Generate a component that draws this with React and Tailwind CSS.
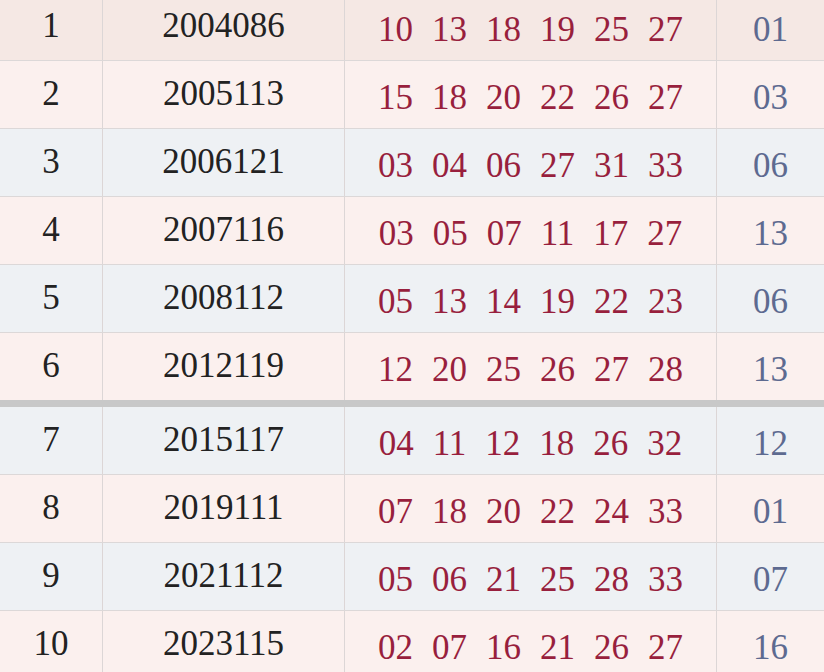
const rows = [
  ["1", "2004086", ["10", "13", "18", "19", "25", "27"], "01", "bg-[#f5e8e4]"],
  ["2", "2005113", ["15", "18", "20", "22", "26", "27"], "03", "bg-[#fbf0ee]"],
  ["3", "2006121", ["03", "04", "06", "27", "31", "33"], "06", "bg-[#eef1f4]"],
  ["4", "2007116", ["03", "05", "07", "11", "17", "27"], "13", "bg-[#fbf0ee]"],
  ["5", "2008112", ["05", "13", "14", "19", "22", "23"], "06", "bg-[#eef1f4]"],
  ["6", "2012119", ["12", "20", "25", "26", "27", "28"], "13", "bg-[#fbf0ee]"],
  ["7", "2015117", ["04", "11", "12", "18", "26", "32"], "12", "bg-[#eef1f4]"],
  ["8", "2019111", ["07", "18", "20", "22", "24", "33"], "01", "bg-[#fbf0ee]"],
  ["9", "2021112", ["05", "06", "21", "25", "28", "33"], "07", "bg-[#eef1f4]"],
  ["10", "2023115", ["02", "07", "16", "21", "26", "27"], "16", "bg-[#fbf0ee]"],
];

function Row({ r, divider }) {
  const [n, issue, reds, blue, bg] = r;
  return (
    <div
      className={`flex ${bg} ${divider ? "h-[74px] border-b-[7px] border-b-[#c8c8c8]" : "h-[68px] border-b border-b-[#dcd8d8]"}`}
    >
      <div className="w-[103px] shrink-0 border-r border-r-[#dcd6d6] flex items-center justify-center text-[#222222] pb-[2px]">
        {n}
      </div>
      <div className="w-[242px] shrink-0 border-r border-r-[#dcd6d6] flex items-center justify-center text-[#222222] pb-[2px]">
        {issue}
      </div>
      <div className="w-[372px] shrink-0 border-r border-r-[#dcd6d6] flex items-center justify-center gap-[19px] text-[#981f3d] pt-[5px]">
        {reds.map((x, i) => (
          <span key={i}>{x}</span>
        ))}
      </div>
      <div className="flex-1 flex items-center justify-center text-[#5d6a90] pt-[5px]">
        {blue}
      </div>
    </div>
  );
}

export default function App() {
  return (
    <div
      className="w-[824px] h-[672px] overflow-hidden bg-[#fbf0ee]"
      style={{ fontFamily: '"Liberation Serif", "DejaVu Serif", serif' }}
    >
      <div className="-mt-[7px] text-[35px] leading-none">
        {rows.map((r, i) => (
          <Row key={i} r={r} divider={i === 5} />
        ))}
      </div>
    </div>
  );
}
